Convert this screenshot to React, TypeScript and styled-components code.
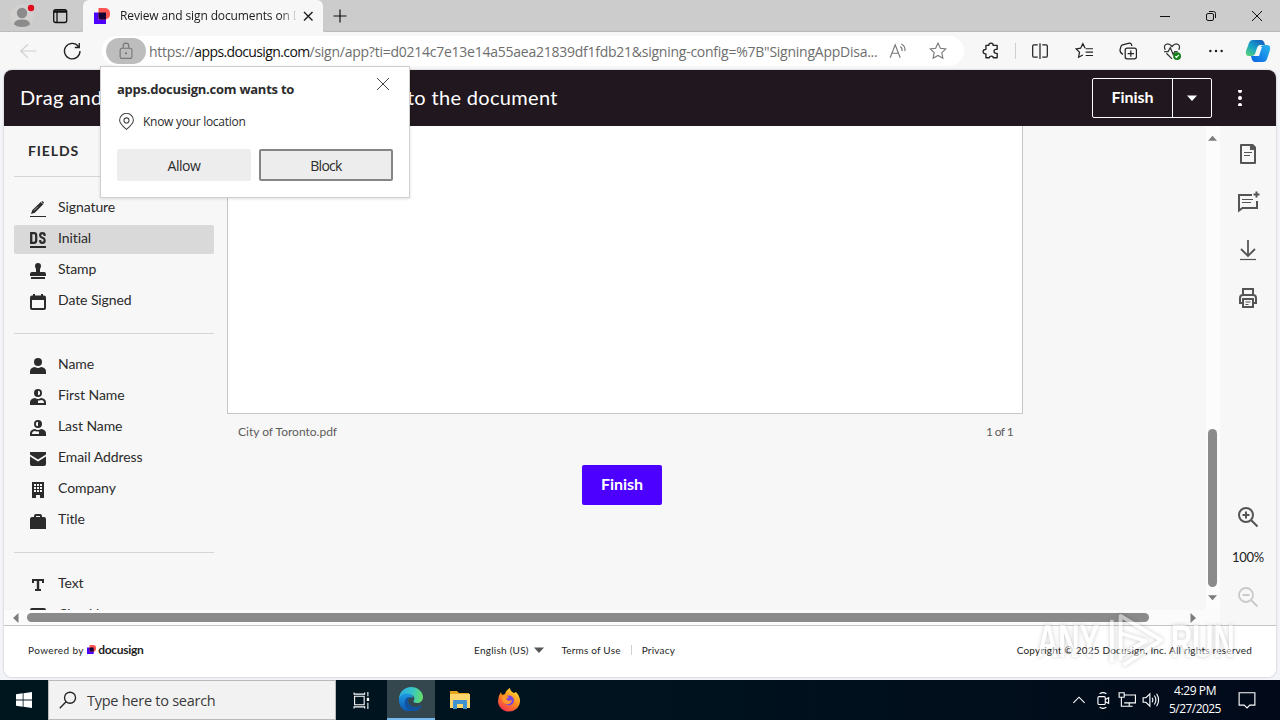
import React from 'react';
import styled, { createGlobalStyle } from 'styled-components';

const GlobalStyle = createGlobalStyle`
  * {
    box-sizing: border-box;
  }
  body {
    margin: 0;
    overflow: hidden;
    font-family: 'Open Sans', 'Noto Sans', sans-serif;
  }
  button {
    padding: 0;
    border: 0;
    background: none;
    font: inherit;
    color: inherit;
  }
`;

const Desktop = styled.div`
  position: relative;
  display: flex;
  flex-direction: column;
  width: 1280px;
  height: 720px;
  background: #f3f4f7;
`;

const Text = styled.span<{ $size?: number; $space?: number; $weight?: number; $color?: string }>`
  font-size: ${({ $size = 14 }) => $size}px;
  letter-spacing: ${({ $space = 0 }) => $space}px;
  font-weight: ${({ $weight = 400 }) => $weight};
  color: ${({ $color = 'inherit' }) => $color};
  white-space: pre;
`;

/* browser */

const TabStrip = styled.header`
  display: flex;
  height: 32px;
  background: #cccccc;
`;

const TabStripLeft = styled.div`
  display: flex;
  align-items: center;
  width: 83px;
  padding-left: 9px;
  gap: 17px;
  border-bottom: 1px solid #bdbdbd;
  border-radius: 0 0 4px 0;
`;

const Tab = styled.div`
  display: flex;
  align-items: center;
  width: 240px;
  padding: 0 7px 0 11px;
  background: #f7f7f7;
  border-radius: 6px 6px 0 0;
  color: #1b1b1b;
`;

const TabTitle = styled.div`
  flex: none;
  width: 176px;
  margin: 0 4px 0 10px;
  overflow: hidden;
  font-size: 12px;
  letter-spacing: -0.12px;
  line-height: 20px;
  white-space: nowrap;
  mask-image: linear-gradient(90deg, #000 160px, transparent 178px);
`;

const TabStripRest = styled.div`
  display: flex;
  flex: 1;
  align-items: center;
  justify-content: space-between;
  padding: 0 15px 0 9px;
  border-bottom: 1px solid #b8b8b8;
  border-radius: 0 0 0 4px;
`;

const WindowButtons = styled.div`
  display: flex;
  align-items: center;
  gap: 30px;
`;

const Toolbar = styled.nav`
  display: flex;
  flex: none;
  align-items: center;
  height: 38px;
  padding: 0 9px 0 19px;
  background: #f7f7f7;
`;

const NavButtons = styled.div`
  display: flex;
  align-items: center;
  gap: 24px;
  width: 83px;
`;

const AddressBar = styled.div`
  display: flex;
  align-items: center;
  width: 862px;
  height: 30px;
  padding: 0 17px 0 4px;
  border-radius: 15px;
  background: #fff;
  color: #6e6e6e;
`;

const LockPill = styled.div`
  display: flex;
  align-items: center;
  justify-content: center;
  width: 40px;
  height: 26px;
  margin-right: 3px;
  border-radius: 13px;
  background: #bdbdbd;
`;

const Url = styled.div`
  display: flex;
  width: 740px;
  white-space: pre;
`;

const Spacer = styled.span`
  flex: 1;
`;

const ToolbarIcons = styled.div`
  display: flex;
  flex: 1;
  align-items: center;
  gap: 26px;
  padding-left: 18px;

  svg:last-child {
    margin-left: -6px;
  }
`;

const ToolbarRule = styled.span`
  width: 1px;
  height: 16px;
  margin: 0 -11px;
  background: #cfcfcf;
`;

/* docusign */

const AppFrame = styled.main`
  display: flex;
  flex-direction: column;
  flex: none;
  width: 1272px;
  height: 607px;
  margin: 0 4px 3px;
  overflow: hidden;
  border-radius: 8px;
  background: #f7f7f7;
  box-shadow: 0 0 2px rgba(0, 0, 0, 0.3);
  font-family: Lato, 'Open Sans', sans-serif;
`;

const AppHeader = styled.div`
  display: flex;
  flex: none;
  align-items: center;
  height: 56px;
  padding: 0 28px 0 16px;
  background: #21171e;
  color: #fff;
`;

const HeaderTitle = styled.h1`
  flex: 1;
  margin: 0;
  padding-bottom: 2px;
  font-size: 20px;
  font-weight: 400;
  letter-spacing: 0.32px;
  white-space: nowrap;
`;

const SplitButton = styled.div`
  display: flex;
  width: 120px;
  height: 40px;
  margin-right: 20px;
  border: 1px solid #fff;
  border-radius: 2px;
`;

const SplitMain = styled.button`
  width: 80px;
  padding-bottom: 3px;
  border-right: 1px solid #fff;
`;

const SplitCaret = styled.button`
  display: flex;
  flex: 1;
  align-items: center;
  justify-content: center;
`;

const AppBody = styled.div`
  display: flex;
  flex: none;
  height: 499px;
`;

const ScrollPane = styled.div`
  width: 1216px;
`;

const Columns = styled.div`
  display: flex;
  height: 484px;
  overflow: hidden;
`;

const Fields = styled.aside`
  width: 223px;
  padding: 0 13px 0 10px;
  color: #2b2b2b;
`;

const FieldsTitle = styled.div`
  height: 50px;
  padding-left: 14px;
  line-height: 48px;
`;

const FieldGroup = styled.ul`
  display: flex;
  flex-direction: column;
  gap: 2px;
  margin: 0;
  padding: 17px 0;
  border-top: 1px solid #d6d6d6;
  list-style: none;
`;

const FieldRow = styled.li<{ $active?: boolean }>`
  display: flex;
  flex: none;
  align-items: center;
  gap: 12px;
  height: 29px;
  padding-left: 16px;
  border-radius: 2px;
  background: ${({ $active }) => ($active ? '#d9d9d9' : 'transparent')};

  svg {
    margin-top: 1px;
  }
  span {
    margin-top: -4px;
  }
`;

const DocumentColumn = styled.section`
  width: 796px;
`;

const Page = styled.div`
  height: 288px;
  border: 1px solid #c6c6c6;
  border-top: 0;
  background: #fff;
`;

const PageCaption = styled.div`
  display: flex;
  justify-content: space-between;
  height: 51px;
  padding: 0 10px 0 11px;
  color: #5c5c5c;
  line-height: 36px;
`;

const FinishButton = styled.button`
  display: block;
  width: 80px;
  height: 40px;
  margin-left: 355px;
  padding-bottom: 3px;
  border-radius: 2px;
  background: #4c00ff;
  color: #fff;
`;

const VerticalBar = styled.div`
  display: flex;
  flex-direction: column;
  align-items: center;
  width: 14px;
  height: 484px;
  margin-left: auto;
  padding: 8px 1px 8px 0;
  background: #fcfcfc;
`;

const VerticalThumb = styled.div`
  width: 9px;
  height: 158px;
  margin-top: auto;
  margin-bottom: 6px;
  border-radius: 5px;
  background: #8b8b8b;
`;

const HorizontalBar = styled.div`
  display: flex;
  align-items: center;
  height: 15px;
  padding: 0 22px 0 7px;
  background: #fbfbfb;
`;

const HorizontalThumb = styled.div`
  width: 1122px;
  height: 9px;
  margin: 0 auto 0 6px;
  border-radius: 5px;
  background: #8b8b8b;
`;

const Rail = styled.aside`
  display: flex;
  flex-direction: column;
  align-items: center;
  gap: 24px;
  width: 56px;
  padding: 16px 0;
  color: #555;
`;

const ZoomControls = styled.div`
  display: flex;
  flex-direction: column;
  align-items: center;
  gap: 20px;
  margin-top: 171px;
  line-height: 16px;
`;

const Footer = styled.footer`
  display: flex;
  align-items: center;
  flex: 1;
  padding: 0 24px 4px;
  border-top: 1px solid #c4c4c4;
  background: #fff;
  color: #1e1e1e;
`;

const Powered = styled.div`
  display: flex;
  align-items: center;
  width: 446px;
`;

const FooterLinks = styled.div`
  display: flex;
  flex: 1;
  align-items: center;

  svg {
    margin-right: 17px;
  }
`;

const FooterRule = styled.span`
  width: 1px;
  height: 10px;
  margin: 0 10px;
  background: #d0d0d0;
`;

/* permission popup */

const Popup = styled.div`
  position: absolute;
  top: 66px;
  left: 100px;
  display: flex;
  flex-direction: column;
  width: 310px;
  height: 132px;
  padding: 9px 16px 16px;
  border: 1px solid #cfcfcf;
  background: #fff;
  color: #2b2b2b;
  box-shadow: 0 1px 3px rgba(0, 0, 0, 0.12);
`;

const PopupHead = styled.div`
  display: flex;
  justify-content: space-between;
  height: 34px;
  padding-right: 3px;
  line-height: 27px;

  svg {
    margin-top: 1px;
  }
`;

const PopupLine = styled.div`
  display: flex;
  align-items: center;
  gap: 8px;
  height: 22px;
  padding-left: 1px;
`;

const PopupButtons = styled.div`
  display: flex;
  gap: 8px;
  margin-top: auto;
`;

const PopupButton = styled.button<{ $focused?: boolean }>`
  width: 134px;
  height: 32px;
  padding-bottom: 1px;
  border: ${({ $focused }) => ($focused ? '2px solid #858585' : '0')};
  border-radius: 2px;
  background: #ededed;
`;

const Watermark = styled.div`
  position: absolute;
  top: 606px;
  left: 1037px;
  display: flex;
  align-items: center;
  gap: 6px;
  height: 70px;
  color: #fff;
  opacity: 0.5;
  filter: drop-shadow(0 0 2px rgba(0, 0, 0, 0.4));
`;

const WatermarkWord = styled.span`
  width: 64px;
  font: 700 46px/70px 'Liberation Sans', sans-serif;
  white-space: nowrap;
  transform: scaleX(0.64);
  transform-origin: left;
`;

/* windows taskbar */

const Taskbar = styled.footer`
  display: flex;
  height: 40px;
  background: linear-gradient(90deg, #00161f, #00131f 50%, #020a1a);
  color: #fff;
`;

const TaskButton = styled.div<{ $active?: boolean; $width?: number }>`
  display: flex;
  align-items: center;
  justify-content: center;
  width: ${({ $width = 49 }) => $width}px;
  border-bottom: ${({ $active }) => ($active ? '2px solid #76b9ed' : '0')};
  background: ${({ $active }) => ($active ? '#34474e' : 'transparent')};
`;

const SearchBox = styled.div`
  display: flex;
  align-items: center;
  gap: 10px;
  width: 288px;
  padding-left: 10px;
  border: 1px solid #b9b9b9;
  background: #f2f2f2;
  color: #3a3a3a;
`;

const Tray = styled.div`
  display: flex;
  align-items: center;
  gap: 6px;
  margin-left: auto;
  padding-right: 24px;
`;

const Clock = styled.div`
  display: flex;
  flex-direction: column;
  align-items: center;
  width: 58px;
  margin-right: 8px;
  line-height: 18px;
`;

type IconProps = {
  size?: number;
  box?: number;
  color?: string;
  stroke?: number;
  filled?: boolean;
  children: React.ReactNode;
};

const Svg = styled.svg`
  flex: none;
`;

const Icon = ({ size = 18, box = 16, color = 'currentColor', stroke = 1, filled, children }: IconProps) => (
  <Svg
    width={size}
    height={size}
    viewBox={`0 0 ${box} ${box}`}
    fill={filled ? color : 'none'}
    stroke={filled ? 'none' : color}
    strokeWidth={stroke}
  >
    {children}
  </Svg>
);

const DocusignMark = ({ size = 16 }) => (
  <Icon size={size} filled>
    <path d="M0 4.500h12V16H0z" fill="#4c00ff" />
    <path d="M4.500 0H11a5 5 0 0 1 5 5v1.500a5 5 0 0 1-5 5H4.500z" fill="#ff5252" />
    <path d="M4.500 4.500H12v7H7q-2.500 0-2.500-2.500z" fill="#130032" />
  </Icon>
);

const Arrow = ({ dir, size = 10, color = '#7d7d7d' }: { dir: string; size?: number; color?: string }) => {
  const shapes: Record<string, string> = {
    up: 'M0 7.500 5 2l5 5.500z',
    down: 'M0 2.500h10L5 8z',
    left: 'M7.500 0v10L2 5z',
    right: 'M2.500 0v10L8 5z',
  };
  return (
    <Icon size={size} box={10} color={color} filled>
      <path d={shapes[dir]} />
    </Icon>
  );
};

const fieldIcons: Record<string, React.ReactNode> = {
  Signature: (
    <>
      <path d="M0 15h16v1H0zM1 13l1.200-3.800L10.700.9l2.600 2.400-8.500 8.500z" />
      <path d="M11.400.7 12.500 0 14 1.400l-.7 1.300z" />
      <path d="m4 9.600 4-4" stroke="#f7f7f7" strokeWidth=".6" />
    </>
  ),
  Initial: (
    <>
      <path d="M0 14h16v2H0z" />
      <path d="M1.200 1.200H4q2.200 0 2.200 2.200v5.200q0 2.200-2.200 2.200H1.200z" fill="none" stroke="#2b2b2b" strokeWidth="2.300" />
      <path
        d="M14.600 4V3q0-1.800-2.200-1.800T10.200 3v.7q0 1.300 2.200 2.100t2.200 2.200v1q0 1.900-2.200 1.900T10.200 9V8"
        fill="none"
        stroke="#2b2b2b"
        strokeWidth="2.200"
      />
    </>
  ),
  Stamp: <path d="M5 3a3 3 0 1 1 6 0c0 1.500-1 2.500-1 3.500V9h4q2 0 2 2v2H0v-2q0-2 2-2h4V6.500C6 5.500 5 4.500 5 3zM1 14h14v2H1z" />,
  'Date Signed': (
    <path
      fillRule="evenodd"
      d="M3 0h2v1.500h6V0h2v1.500h1q2 0 2 2V14q0 2-2 2H2q-2 0-2-2V3.500q0-2 2-2h1zM2 6v8h12V6z"
    />
  ),
  Name: (
    <>
      <circle cx="8" cy="4" r="4" />
      <path d="M0 16v-2.500Q0 9.500 5 9q3 2 6 0 5 .5 5 4.500V16z" />
    </>
  ),
  'First Name': (
    <>
      <path fillRule="evenodd" d="M8 0a4 4 0 1 1 0 8 4 4 0 0 1 0-8zm0 1.800v4.400a2.200 2.200 0 0 0 0-4.400z" />
      <path fillRule="evenodd" d="M0 16v-2.500Q0 9.500 5 9q3 2 6 0 5 .5 5 4.500V16zm8-4.500V14h6q0-3-3-3-1 .5-3 .5z" />
    </>
  ),
  'Last Name': (
    <>
      <path fillRule="evenodd" d="M8 0a4 4 0 1 1 0 8 4 4 0 0 1 0-8zm0 1.800a2.200 2.200 0 0 0 0 4.400z" />
      <path fillRule="evenodd" d="M0 16v-2.500Q0 9.500 5 9q3 2 6 0 5 .5 5 4.500V16zm2-2h7v-2.500q-3 0-4-.5-3 0-3 3z" />
    </>
  ),
  'Email Address': (
    <>
      <path d="M0 1h16v2.500L8 8.500 0 3.500z" />
      <path d="M0 5.500l8 5 8-5V13q0 2-2 2H2q-2 0-2-2z" />
    </>
  ),
  Company: (
    <>
      <path d="M2 0h12v16h-4v-3H6v3H2z" />
      <path d="M4 2h2v2H4zm3 0h2v2H7zm3 0h2v2h-2zM4 5h2v2H4zm3 0h2v2H7zm3 0h2v2h-2zM4 8h2v2H4zm3 0h2v2H7zm3 0h2v2h-2z" fill="#f7f7f7" />
    </>
  ),
  Title: <path fillRule="evenodd" d="M4 4V3q0-2 2-2h4q2 0 2 2v1h2q2 0 2 2v10H0V6q0-2 2-2zm2 0h4V3H6z" />,
  Text: <path d="M2 2h12v4h-2V4H9.200v8H11v2H5v-2h1.800V4H4v2H2z" />,
  Checkbox: <path fillRule="evenodd" d="M2 0h12q2 0 2 2v12q0 2-2 2H2q-2 0-2-2V2q0-2 2-2zm0 2v12h12V2z" />,
};

const fieldGroups = [
  ['Signature', 'Initial', 'Stamp', 'Date Signed'],
  ['Name', 'First Name', 'Last Name', 'Email Address', 'Company', 'Title'],
  ['Text', 'Checkbox'],
];

const BrowserChrome = () => (
  <>
    <TabStrip>
      <TabStripLeft>
        <Icon size={26} box={26} filled>
          <circle cx="13" cy="13" r="11.500" fill="#d2d1d0" />
          <circle cx="13" cy="10" r="5.200" fill="#8b8b8b" />
          <path d="M5 21.500q0-5 8-5t8 5q-3 2.500-8 2.500t-8-2.500z" fill="#8b8b8b" />
          <circle cx="22" cy="5" r="3.200" fill="#e00b1c" />
        </Icon>
        <Icon size={16} color="#111" stroke={1.300}>
          <rect x="1.700" y="1.700" width="13" height="12.800" rx="2" />
          <path d="M2 3.500h12.500" strokeWidth="2.500" />
          <path d="M5 4v10" />
        </Icon>
      </TabStripLeft>
      <Tab>
        <DocusignMark />
        <TabTitle>Review and sign documents on Docusign</TabTitle>
        <Icon size={16} stroke={1.400}>
          <path d="m4 4 8.500 8.500M12.500 4 4 12.500" />
        </Icon>
      </Tab>
      <TabStripRest>
        <Icon size={16} color="#111" stroke={1.200}>
          <path d="M1.500 8h13M8 1.500v13" />
        </Icon>
        <WindowButtons>
          <Icon size={16} color="#111">
            <path d="M3 8.500h10" />
          </Icon>
          <Icon size={16} color="#111">
            <rect x="3.500" y="5.500" width="7" height="7" rx="1.500" />
            <path d="M6 3.500h4.500q2 0 2 2V10" />
          </Icon>
          <Icon size={16} color="#111">
            <path d="m3 3 10 10M13 3 3 13" />
          </Icon>
        </WindowButtons>
      </TabStripRest>
    </TabStrip>
    <Toolbar>
      <NavButtons>
        <Icon color="#cfcfcf">
          <path d="M1.500 8h14M8 2 1.500 8 8 14" />
        </Icon>
        <Icon size={22} box={22} color="#222" stroke={1.300}>
          <path d="M17.500 6.500A7.800 7.800 0 1 0 19 11M18.300 3v4.500h-4.500" />
        </Icon>
      </NavButtons>
      <AddressBar>
        <LockPill>
          <Icon color="#777">
            <rect x="2.800" y="5.500" width="10.500" height="9" rx="1.500" />
            <path d="M5.500 5.500v-2Q5.500 1 8 1t2.500 2.500v2" />
            <circle cx="8" cy="10" r=".5" />
          </Icon>
        </LockPill>
        <Url>
          <Text $space={-0.3}>https://</Text>
          <Text $space={-0.62} $color="#111">
            apps.docusign.com
          </Text>
          <Text $space={-0.25}>/sign/app?ti=d0214c7e13e14a55aea21839df1fdb21&signing-config=%7B"SigningAppDisa...</Text>
        </Url>
        <Icon size={18} color="#777">
          <path d="m1 14 4.500-11.500L10 14M2.600 10h5.800M10 4q2 1.200 1.500 4M11 1.800q4 2 3 6.200" />
        </Icon>
        <Spacer />
        <Icon color="#777">
          <path d="m8 1 2.100 4.500 4.900.6-3.600 3.400.9 4.900L8 12l-4.300 2.400.9-4.900L1 6.100l4.900-.6z" />
        </Icon>
      </AddressBar>
      <ToolbarIcons>
        <Icon color="#222" stroke={1.200}>
          <path
            d="M3.500 3H6q0-2 2-2t2 2h3.500v3.500h-1q-1.800 0-1.800 1.800t1.800 1.800h1V14H10q0-1.500-1.700-1.500T6.500 14h-3v-3.500h-.3Q1 10.500 1 8.500t2.500-2z"
            strokeLinejoin="round"
          />
        </Icon>
        <ToolbarRule />
        <Icon color="#222" stroke={1.100}>
          <path d="M6 2.500H2.500q-1 0-1 1v9q0 1 1 1H6M8 1v14M10 2.500h3.500q1 0 1 1v9q0 1-1 1H10" />
        </Icon>
        <Icon color="#222" stroke={1.100}>
          <path d="M9 5.500 7 1.500 5 5.500l-4 .6 3 2.900-.8 4.500L7 11.500M9.500 6H16M9.500 9H16M9.500 12H16" />
        </Icon>
        <Icon color="#222" stroke={1.100}>
          <rect x="5.500" y="5.500" width="10" height="9.500" rx="1.800" />
          <path d="M10.500 7.500v5.500M7.700 10.300h5.600M3.500 11Q.5 9.500 1 6.500L1.700 4q.3-1.200 1.500-1.500l6-1.500q1.300-.2 1.800 1l.5 1.500" />
        </Icon>
        <Icon color="#333" stroke={1.100}>
          <path d="M2 7q-2-4 1.500-5.200Q6 1.500 8 4q2-2.500 4.500-2.200Q16 3 14 7M1 8.500h3.500L6.500 5l2.500 6 1.500-2.500H13M3 10l5 5" />
          <circle cx="12.500" cy="12.500" r="3.500" fill="#13801a" stroke="none" />
          <path d="m11 12.700 1 1 2-2.200" stroke="#fff" />
        </Icon>
        <Icon color="#222" filled>
          <circle cx="3" cy="8" r="1.100" />
          <circle cx="8" cy="8" r="1.100" />
          <circle cx="13" cy="8" r="1.100" />
        </Icon>
        <Icon size={26} box={26} filled>
          <defs>
            <linearGradient id="copA" x1="0" y1="1" x2=".8" y2="0">
              <stop offset="0" stopColor="#62d66b" />
              <stop offset=".5" stopColor="#16a5c9" />
              <stop offset="1" stopColor="#1460bd" />
            </linearGradient>
            <linearGradient id="copB" x1="0" y1="1" x2="1" y2="0">
              <stop offset="0" stopColor="#0a62e4" />
              <stop offset="1" stopColor="#28b7ee" />
            </linearGradient>
          </defs>
          <path d="M8 2h8q3 0 4 5h-5q-2 0-3 3l-2 6q-1 2-3 2H4q-4 0-3-5L4 5q1-3 4-3z" fill="url(#copA)" />
          <path d="M20 7h2q4 0 3 5l-3 9q-1 3-4 3h-8q-3 0-4-6h4q2 0 3-2l2.500-7q.8-2 4.500-2z" fill="url(#copB)" />
          <path d="M13 9h4l-3 9h-4z" fill="#f7f7f7" />
        </Icon>
      </ToolbarIcons>
    </Toolbar>
  </>
);

const DocusignApp = () => (
  <AppFrame>
    <AppHeader>
      <HeaderTitle>Drag and drop fields from the left panel onto the document</HeaderTitle>
      <SplitButton>
        <SplitMain>
          <Text $size={16} $weight={700}>
            Finish
          </Text>
        </SplitMain>
        <SplitCaret>
          <Arrow dir="down" color="#fff" />
        </SplitCaret>
      </SplitButton>
      <Icon size={16} box={16} color="#fff" filled>
        <circle cx="8" cy="0.900" r="2" />
        <circle cx="8" cy="8" r="2" />
        <circle cx="8" cy="15" r="2" />
      </Icon>
    </AppHeader>
    <AppBody>
      <ScrollPane>
        <Columns>
          <Fields>
            <FieldsTitle>
              <Text $weight={700} $space={0.9}>
                FIELDS
              </Text>
            </FieldsTitle>
            {fieldGroups.map((group) => (
              <FieldGroup key={group[0]}>
                {group.map((name) => (
                  <FieldRow key={name} $active={name === 'Initial'}>
                    <Icon size={16} color="#2b2b2b" filled>
                      {fieldIcons[name]}
                    </Icon>
                    <Text $size={14} $space={-0.08}>
                      {name}
                    </Text>
                  </FieldRow>
                ))}
              </FieldGroup>
            ))}
          </Fields>
          <DocumentColumn>
            <Page />
            <PageCaption>
              <Text $size={12}>City of Toronto.pdf</Text>
              <Text $size={12} $space={-0.6}>
                1 of 1
              </Text>
            </PageCaption>
            <FinishButton>
              <Text $size={16} $weight={700}>
                Finish
              </Text>
            </FinishButton>
          </DocumentColumn>
          <VerticalBar>
            <Arrow dir="up" size={9} />
            <VerticalThumb />
            <Arrow dir="down" size={9} />
          </VerticalBar>
        </Columns>
        <HorizontalBar>
          <Arrow dir="left" />
          <HorizontalThumb />
          <Arrow dir="right" />
        </HorizontalBar>
      </ScrollPane>
      <Rail>
        <Icon size={24} box={24} stroke={2}>
          <path d="M5 3h10l4 4v14H5z" strokeLinejoin="round" />
          <path d="M14 2h3l3 3v3h-6z" fill="currentColor" stroke="none" />
          <path d="M8 10.500h8M8 13.500h6" strokeWidth="1.200" />
        </Icon>
        <Icon size={24} box={24} stroke={2}>
          <path d="M16 5H3v15.500L6.500 18H21v-7" />
          <path d="M20.500 1.500v6M17.500 4.500h6" />
          <path d="M6 9.500h11M6 12.500h9" strokeWidth="1.200" />
        </Icon>
        <Icon size={24} box={24} stroke={2}>
          <path d="M12 2v16M5 11l7 7 7-7" strokeWidth="1.800" />
          <path d="M4 21.500h16" strokeWidth="1.200" />
        </Icon>
        <Icon size={24} box={24} stroke={2}>
          <path d="M7 8V3h10v5M7 17H4v-5q0-3 3-3h10q3 0 3 3v5h-3" />
          <path d="M7 13h10v8H7z" />
          <path d="M9.500 16h5M9.500 18.500h3" strokeWidth="1" />
        </Icon>
        <ZoomControls>
          <Icon size={24} box={24} stroke={2}>
            <circle cx="10" cy="10" r="7" />
            <path d="m15 15 6.500 6.500M10 6.500v7M6.500 10h7" />
          </Icon>
          <Text $size={13} $space={-0.3} $color="#222">
            100%
          </Text>
          <Icon size={24} box={24} stroke={1.800} color="#c9c9c9">
            <circle cx="10" cy="10" r="7" />
            <path d="m15 15 6.500 6.500M6.500 10h7" />
          </Icon>
        </ZoomControls>
      </Rail>
    </AppBody>
    <Footer>
      <Powered>
        <Text $size={10} $space={0.4}>
          Powered by{' '}
        </Text>
        <DocusignMark size={9} />
        <Text $size={12} $weight={700} $space={-0.3}>
          {' '}
          docusign
        </Text>
      </Powered>
      <FooterLinks>
        <Text $size={10} $space={0.25}>
          English (US){'  '}
        </Text>
        <Arrow dir="down" color="#555" />
        <Text $size={10} $space={0.2}>
          Terms of Use
        </Text>
        <FooterRule />
        <Text $size={10} $space={0.2}>
          Privacy
        </Text>
      </FooterLinks>
      <Text $size={10} $space={0.2}>
        Copyright © 2025 Docusign, Inc. All rights reserved
      </Text>
    </Footer>
  </AppFrame>
);

const LocationPopup = () => (
  <Popup>
    <PopupHead>
      <Text $weight={700} $size={13} $space={-0.25}>
        apps.docusign.com wants to
      </Text>
      <Icon size={14} box={14} color="#444">
        <path d="m1 1 12 12M13 1 1 13" />
      </Icon>
    </PopupHead>
    <PopupLine>
      <Icon size={17} color="#444">
        <path d="M8 15.500Q1.500 10 1.500 6.800A6.300 6.300 0 0 1 14.500 6.800Q14.500 10 8 15.500z" />
        <circle cx="8" cy="7" r="2.400" />
      </Icon>
      <Text $size={12} $space={-0.28}>
        Know your location
      </Text>
    </PopupLine>
    <PopupButtons>
      <PopupButton>
        <Text $size={14} $space={-0.45}>
          Allow
        </Text>
      </PopupButton>
      <PopupButton $focused>
        <Text $size={14} $space={-0.7}>
          Block
        </Text>
      </PopupButton>
    </PopupButtons>
  </Popup>
);

const WindowsTaskbar = () => (
  <Taskbar>
    <TaskButton $width={48}>
      <Icon size={16} color="#fff" filled>
        <path d="M0 2.300 6.700 1.300V7.600H0zM7.500 1.200 16 0v7.600H7.500zM0 8.400h6.700v6.300L0 13.700zM7.500 8.400H16V16l-8.500-1.200z" />
      </Icon>
    </TaskButton>
    <SearchBox>
      <Icon size={18} color="#222" stroke={1.200}>
        <circle cx="9.800" cy="6" r="4.900" />
        <path d="M6.300 9.500.7 15.300" />
      </Icon>
      <Text $size={14.5} $space={-0.26}>
        Type here to search
      </Text>
    </SearchBox>
    <TaskButton $width={51}>
      <Icon size={17} color="#fff">
        <path d="M1.500 4v8h9V4zM1 .5v1.500h10V.5M1 15.500V14h10v1.500M14 0v4M14 10v6" />
        <path d="M13 5.500h2.200v3H13z" fill="#fff" stroke="none" />
      </Icon>
    </TaskButton>
    <TaskButton $active $width={48}>
      <Icon size={24} box={24} filled>
        <defs>
          <linearGradient id="edgeTop" x1="0" y1=".3" x2="1" y2=".4">
            <stop offset="0" stopColor="#2fa9e4" />
            <stop offset=".55" stopColor="#36c5c5" />
            <stop offset="1" stopColor="#66dd68" />
          </linearGradient>
          <linearGradient id="edgeLow" x1="0" y1="0" x2="0" y2="1">
            <stop offset="0" stopColor="#1c9be3" />
            <stop offset="1" stopColor="#0c52ad" />
          </linearGradient>
        </defs>
        <path d="M0 12A12 12 0 0 1 12 0c7 0 12 5 12 10 0 4-3 6-6 6-2.500 0-4-1-3.500-2C17 11 14 7 9 7 4 7 1 10 0 12z" fill="url(#edgeTop)" />
        <path d="M0 12c1-4 5-6 9-5.500 3 .3 5 2 5 4.500-3-2-5 0-5 3 0 4 5 7 9.500 6 2-.5 3.500-1.500 4-1A12 12 0 0 1 0 12z" fill="url(#edgeLow)" />
        <path d="M9 14c0 4 5 7 9.500 6 2-.5 3.500-1.500 4-1A12 12 0 0 1 14 24C8 23 5 19 6 14c.5-2.500 2-4 4.500-4Q9 12 9 14z" fill="#12529c" />
      </Icon>
    </TaskButton>
    <TaskButton>
      <Icon size={22} box={22} filled>
        <path d="M1 2h7l2 2h10v3H1z" fill="#e5a51c" />
        <path d="M1 5h20v14H1z" fill="#fdd56d" />
        <path d="M4 20v-8q0-1 1-1h12q1 0 1 1v8h-4v-5H8v5z" fill="#3f91d0" />
      </Icon>
    </TaskButton>
    <TaskButton>
      <Icon size={24} box={24} filled>
        <defs>
          <linearGradient id="fox" x1=".8" y1="0" x2=".2" y2="1">
            <stop offset="0" stopColor="#ffe03a" />
            <stop offset=".5" stopColor="#ff8a1e" />
            <stop offset="1" stopColor="#f52a55" />
          </linearGradient>
        </defs>
        <path d="M1 13q0-5 3-9l1 3 3-1q1-4 5-6 0 3 4 5l2-1q4 4 4 9a11 10.500 0 0 1-22 0z" fill="url(#fox)" />
        <circle cx="12" cy="12.500" r="5" fill="#7b45dd" />
        <path d="M5 8q4-1 7 1l-3 2q2 3 6 1-1 5-6 4-5-2-4-8z" fill="#ff962b" />
      </Icon>
    </TaskButton>
    <Tray>
      <Icon color="#fff">
        <path d="m3 10.500 5-5 5 5" />
      </Icon>
      <Icon color="#fff">
        <rect x="3.500" y="5" width="6.500" height="7" rx="1" />
        <path d="m10 7.500 3-1.500v5l-3-1.500M5 2.500q3-2 6 0M5 14.500q3 2 6 0" />
      </Icon>
      <Icon color="#fff">
        <path d="M5 3.500h10.500v7H5.500M10 10.500v3M7 13.500h6M1 1.500h4.500v4H1zM3 5.500v8h4" />
      </Icon>
      <Icon color="#fff">
        <path d="M1 6v4h2.500L7 13.500v-11L3.500 6zM9 6q1.300 2 0 4M11 4q2.700 4 0 8M13 2.500q3.500 5.500 0 11" />
      </Icon>
      <Clock>
        <Text $size={12} $space={-0.4}>
          4:29 PM
        </Text>
        <Text $size={12} $space={-0.55}>
          5/27/2025
        </Text>
      </Clock>
      <Icon color="#fff" size={18}>
        <path d="M1 1.500h14v11H10.500L8 15l-2.500-2.500H1z" />
      </Icon>
    </Tray>
  </Taskbar>
);

const App = () => {
  return (
    <>
      <GlobalStyle />
      <Desktop>
        <BrowserChrome />
        <DocusignApp />
        <WindowsTaskbar />
        <LocationPopup />
        <Watermark>
          <WatermarkWord>ANY</WatermarkWord>
          <Icon size={58} box={60} color="#fff" stroke={4}>
            <path d="M5 52V8M14 50V4l42 25-39 26M14 22l26 8-26 15z" strokeLinejoin="round" />
          </Icon>
          <WatermarkWord>RUN</WatermarkWord>
        </Watermark>
      </Desktop>
    </>
  );
};

App.displayName = 'App';
export default App;
